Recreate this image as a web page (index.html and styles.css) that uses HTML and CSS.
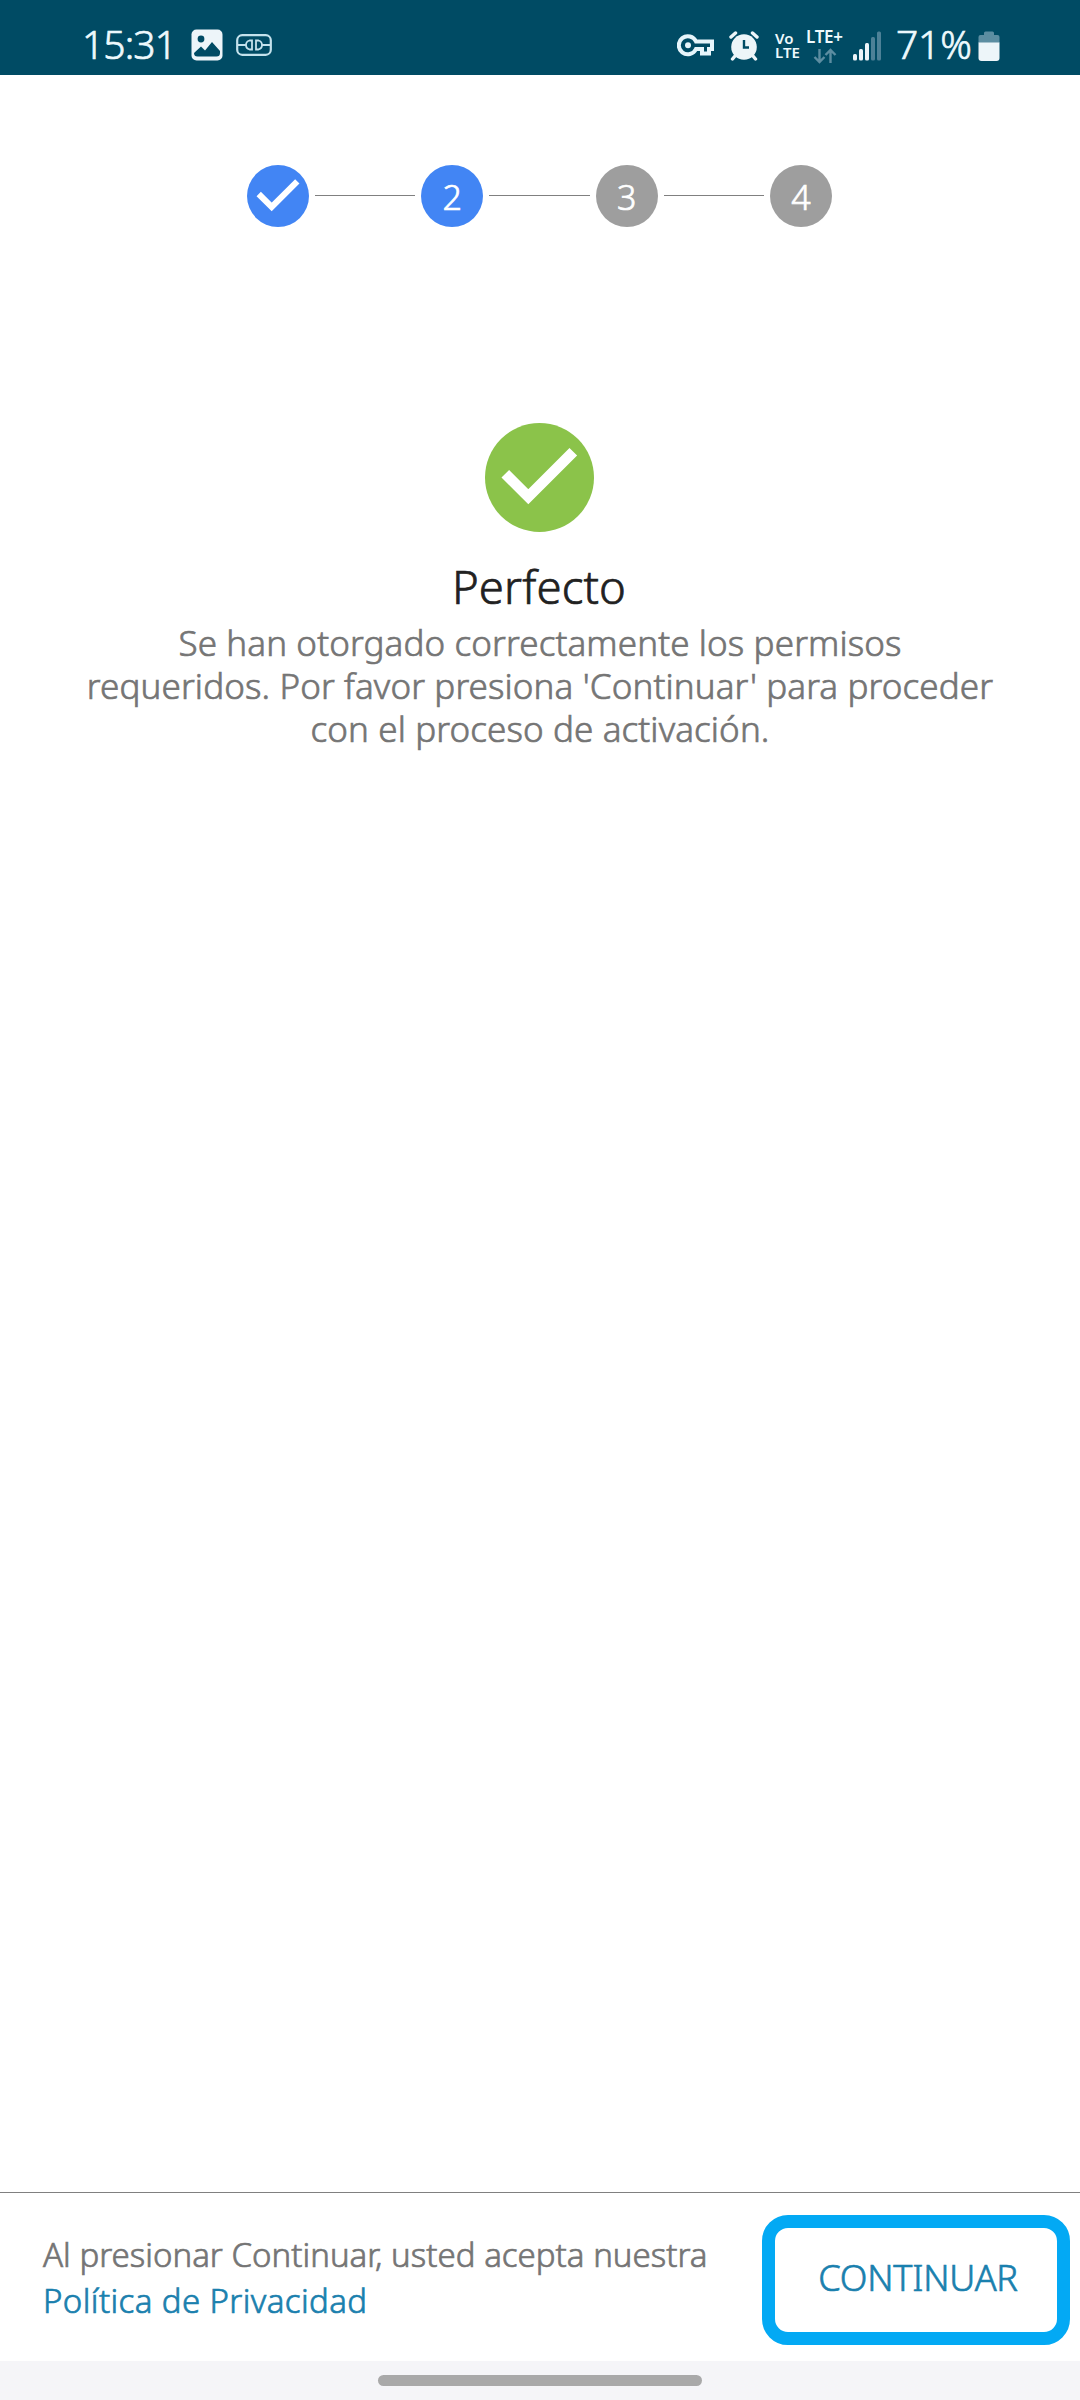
FILE: index.html
```html
<!DOCTYPE html>
<html lang="es">
<head>
<meta charset="utf-8">
<title>Permisos</title>
<link rel="stylesheet" href="styles.css">
</head>
<body>
<header class="status">
  <div class="status-left">
    <span class="clock">15:31</span>
    <svg class="ic-image" width="32" height="32" viewBox="0 0 32 32"><rect x="0.5" y="0.5" width="31" height="31" rx="5" fill="#edf5f9"/><circle cx="10" cy="10" r="3.4" fill="#004b64"/><path d="M3 24 L10 17.5 L14 21.5 L21 13 L29 22 V24 Q29 27.5 25.5 27.5 H6.500 Q3 27.500 3 24Z" fill="#004b64"/></svg>
    <svg class="ic-plug" width="36" height="22" viewBox="0 0 36 22" fill="none" stroke="#c4e2ec" stroke-width="2"><rect x="1.200" y="1.200" width="33.600" height="19.600" rx="5" stroke-width="2.200"/><path d="M2 11h8M26 11h8" /><path d="M16 6.500v9h-2.500q-3.500-1-3.500-4.500t3.500-4.500zM20 6.500v9h2.500q3.500-1 3.500-4.500t-3.500-4.500z" stroke-width="1.800"/></svg>
  </div>
  <div class="status-right">
    <svg class="ic-key" width="38" height="24" viewBox="0 0 38 24" fill="none" stroke="#e6f5fb" stroke-width="4"><path d="M19 7.500H35V15H32V19.500H25V15H19A9 9 0 1 1 19 7.500Z"/><circle cx="11" cy="11.300" r="3" fill="#e6f5fb" stroke="none"/></svg>
    <svg class="ic-alarm" width="30" height="30" viewBox="0 0 30 30" fill="none" stroke="#edf5f9" stroke-width="3.400" stroke-linecap="round"><circle cx="15" cy="16" r="12.800" fill="#edf5f9" stroke="none"/><path d="M2 6L6.500 2M28 6L23.500 2M6 25L3.500 28M24 25L26.500 28"/><path d="M15 9V16.500H20" stroke="#004b64" stroke-width="2.400" stroke-linecap="butt"/></svg>
    <div class="volte"><span>Vo</span><span>LTE</span></div>
    <div class="lte"><span>LTE+</span><svg width="24" height="16" viewBox="0 0 24 16" fill="none" stroke="#5c8da1" stroke-width="2.400"><path d="M6.500 1V14M1.500 9L6.500 14L11.500 9M17.500 15V2M12.500 7L17.500 2L22.500 7"/></svg></div>
    <svg class="ic-signal" width="28" height="30" viewBox="0 0 28 30"><g fill="#edf5f9"><rect x="0" y="23" width="4" height="6.500" rx="1.500"/><rect x="6" y="18" width="4" height="11.500" rx="1.500"/><rect x="12" y="12" width="4" height="17.500" rx="1.500"/></g><g fill="#4d8197"><rect x="18" y="6" width="4" height="23.500" rx="1.500"/><rect x="24" y="0.500" width="4" height="29" rx="1.500"/></g></svg>
    <span class="percent">71%</span>
    <svg class="ic-battery" width="22" height="30" viewBox="0 0 22 30"><path d="M0.500 12V6Q0.500 4 2.500 4H6V2Q6 0.500 7.500 0.500H14.500Q16 0.500 16 2V4H19.500Q21.500 4 21.500 6V12Z" fill="#5c8da1"/><path d="M0.500 11.500H21.500V27Q21.500 30 18.500 30H3.500Q0.500 30 0.500 27Z" fill="#edf5f9"/></svg>
  </div>
</header>
<main class="content">
  <ol class="steps">
    <li class="step active"><svg width="62" height="62" viewBox="0 0 62 62" fill="none" stroke="#fff" stroke-width="6.1"><path d="M11.700 29L24.700 42L50.300 16.400"/></svg></li>
    <li class="line"></li>
    <li class="step active">2</li>
    <li class="line"></li>
    <li class="step">3</li>
    <li class="line"></li>
    <li class="step">4</li>
  </ol>
  <svg class="done" width="110" height="110" viewBox="0 0 110 110"><circle cx="54.500" cy="54.500" r="54.500" fill="#8bc34a"/><path d="M20.300 50.700L43.300 73.700L88.300 28.700" fill="none" stroke="#fff" stroke-width="10.800"/></svg>
  <h1 class="title">Perfecto</h1>
  <p class="message">Se han otorgado correctamente los permisos<br>requeridos. Por favor presiona 'Continuar' para proceder<br>con el proceso de activación.</p>
</main>
<footer class="footer">
  <p class="terms">Al presionar Continuar, usted acepta nuestra<br><a class="link">Política de Privacidad</a></p>
  <button class="continue">CONTINUAR</button>
</footer>
<nav class="navbar"><div class="handle"></div></nav>
</body>
</html>
```
FILE: styles.css
```css
* { box-sizing: border-box; margin: 0; padding: 0; }
body {
  width: 1080px; height: 2400px;
  display: flex; flex-direction: column;
  background: #fff;
  font-family: "Noto Sans", sans-serif; font-weight: 300;
  -webkit-text-stroke: 0.7px currentColor;
  white-space: nowrap; overflow: hidden;
}
svg { display: block; flex: none; }
.status {
  height: 75px; background: #004b64; color: #edf9fd;
  display: flex; justify-content: space-between;
  padding: 0 80px 0 82px;
}
.status-left, .status-right { display: flex; align-items: flex-start; }
.clock, .percent { font-size: 39px; line-height: 56px; padding-top: 16px; }
.clock { width: 109px; letter-spacing: -0.9px; }
.ic-image { margin-top: 29px; }
.ic-plug { margin: 34px 0 0 13px; }
.ic-key { margin: 34px 14px 0 0; }
.ic-alarm { margin: 31px 16px 0 0; }
.volte, .lte { font-weight: 600; -webkit-text-stroke: 0; display: flex; flex-direction: column; }
.volte { width: 32px; padding-top: 31px; font-size: 15px; line-height: 14px; letter-spacing: 0; }
.lte { width: 46px; padding-top: 28px; font-size: 17px; line-height: 17px; letter-spacing: -0.3px; }
.lte span { margin-left: -1px; }
.lte svg { margin: 3px 0 0 6px; }
.ic-signal { margin: 31px 15px 0 0; }
.percent { width: 82px; letter-spacing: -0.2px; }
.ic-battery { margin-top: 31px; }

.content { flex: 1; display: flex; flex-direction: column; align-items: center; padding-top: 90px; }
.steps { width: 585px; height: 62px; margin-right: 1px; display: flex; align-items: center; gap: 6px; list-style: none; }
.step {
  width: 62px; height: 62px; border-radius: 50%; flex: none;
  background: #9e9e9e; color: #fff;
  font-size: 34px; line-height: 64px; text-align: center;
}
.step.active { background: #4285f4; }
.line { flex: 1; height: 1px; margin-bottom: 1px; background: #808080; }
.done { margin-top: 196px; }
.title { margin: 25px 2px 0 0; font-size: 45.5px; font-weight: 300; line-height: 56px; letter-spacing: 0.15px; color: #212121; }
.message { margin-top: 7px; font-size: 35px; line-height: 43px; letter-spacing: 0.12px; text-align: center; color: #757575; }

.footer {
  height: 169px; border-top: 1px solid #808080;
  display: flex; align-items: center; justify-content: space-between;
  padding: 0 10px 0 43px;
}
.terms { padding-top: 2px; font-size: 33px; line-height: 46px; letter-spacing: 0.02px; color: #757575; }
.link { color: #1a80ae; letter-spacing: 0.4px; }
.continue {
  width: 308px; height: 130px; margin-top: 6px; padding: 0 0 6px 4px;
  border: 13px solid #03a9f4; border-radius: 26px; background: #fff;
  font: inherit; font-size: 36px; letter-spacing: -0.2px; color: #1a80ae;
}
.navbar { height: 39px; background: #f5f5f8; display: flex; justify-content: center; padding-top: 14px; }
.handle { width: 324px; height: 11px; border-radius: 6px; background: #a9a9a9; }
```
